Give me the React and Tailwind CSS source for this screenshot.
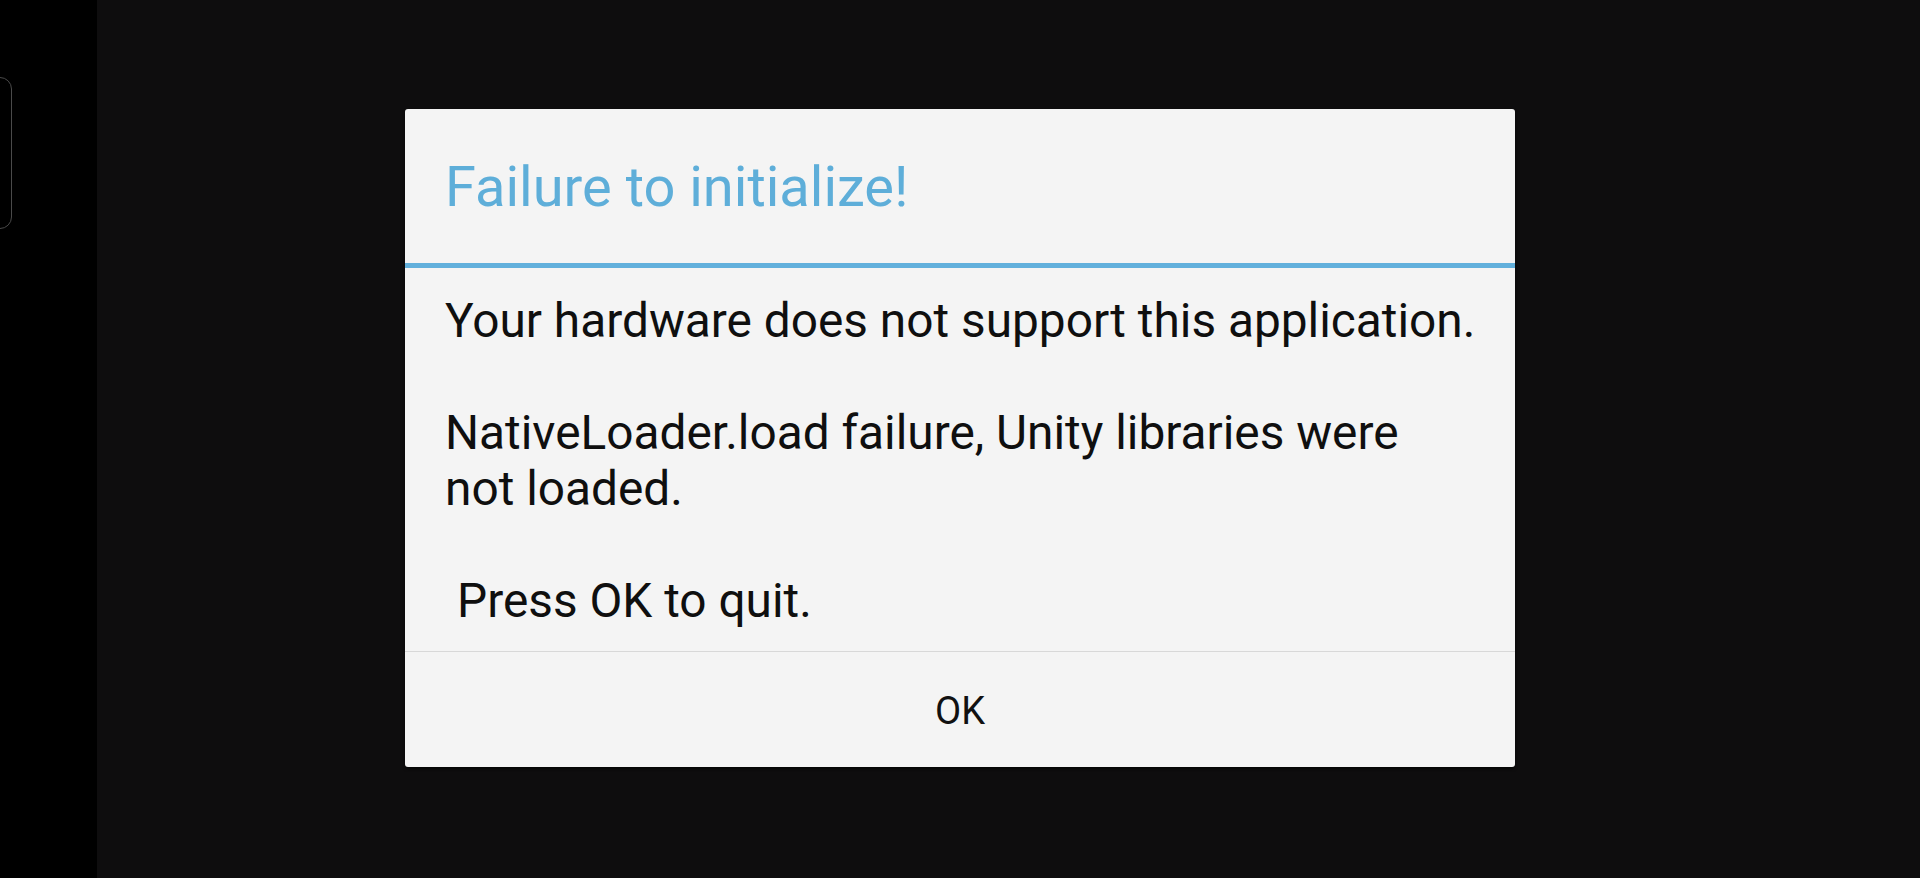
export default function App() {
  return (
    <div
      className="flex h-[878px] w-[1920px] overflow-hidden bg-[#0e0d0e]"
      style={{ fontFamily: "Roboto, 'Noto Sans', sans-serif" }}
    >
      {/* left edge strip */}
      <div className="flex h-full w-[97px] shrink-0 bg-black">
        <div className="-ml-[12px] mt-[77px] h-[152px] w-[24px] rounded-[12px] border border-[#4a4a4a]" />
      </div>

      {/* dialog area */}
      <div className="flex flex-1 pl-[308px] pt-[109px]">
        <div className="flex h-[658px] w-[1110px] shrink-0 flex-col rounded-[3px] bg-[#f4f4f4] shadow-[0_2px_3px_rgba(0,0,0,0.6)]">
          {/* title */}
          <div className="h-[154px] shrink-0 pl-[40px] pt-[50px]">
            <p className="text-[56px] leading-none text-[#5eaed9]">Failure to initialize!</p>
          </div>
          <div className="h-[5px] shrink-0 bg-[#62b0dc]" />

          {/* message */}
          <div className="min-h-0 flex-1 pl-[40px] pr-[20px] pt-[25px] text-[47.8px] leading-[56px] text-[#0f0f0f]">
            <p>Your hardware does not support this application.</p>
            <p className="mt-[56px] pr-[60px]">NativeLoader.load failure, Unity libraries were not loaded.</p>
            <p className="mt-[56px] pl-[12px]">Press OK to quit.</p>
          </div>

          {/* button */}
          <div className="h-px shrink-0 bg-[#d8d8d8]" />
          <button className="flex h-[115px] shrink-0 items-center justify-center pt-[3px] text-[38px] leading-none text-[#111]">
            OK
          </button>
        </div>
      </div>
    </div>
  );
}
